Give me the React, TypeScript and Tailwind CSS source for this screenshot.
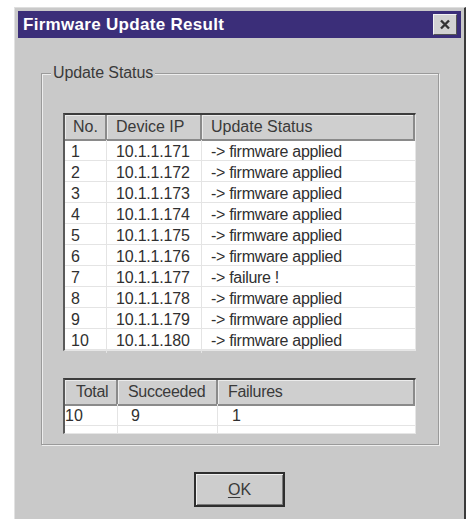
import React from 'react';

const devices = [
  { no: 1, ip: '10.1.1.171', status: '-> firmware applied' },
  { no: 2, ip: '10.1.1.172', status: '-> firmware applied' },
  { no: 3, ip: '10.1.1.173', status: '-> firmware applied' },
  { no: 4, ip: '10.1.1.174', status: '-> firmware applied' },
  { no: 5, ip: '10.1.1.175', status: '-> firmware applied' },
  { no: 6, ip: '10.1.1.176', status: '-> firmware applied' },
  { no: 7, ip: '10.1.1.177', status: '-> failure !' },
  { no: 8, ip: '10.1.1.178', status: '-> firmware applied' },
  { no: 9, ip: '10.1.1.179', status: '-> firmware applied' },
  { no: 10, ip: '10.1.1.180', status: '-> firmware applied' },
];

// raised column header, win9x list-view style
function HeaderCell({ children, className }: { children?: React.ReactNode; className?: string }) {
  return (
    <div
      className={
        'flex items-center h-full bg-[#cfcfcf] text-[#3a3a3a] border-r-2 border-b-2 border-r-[#8a8a8a] border-b-[#8a8a8a] shadow-[inset_1px_1px_0_#ececec] ' +
        (className ?? '')
      }
    >
      {children}
    </div>
  );
}

export default function App() {
  return (
    <div className="w-[474px] h-[519px] bg-white overflow-hidden font-['Liberation_Sans',Arial,sans-serif] text-[16px] text-[#303030]">
      <div className="ml-[14px] mt-[7px] w-[452px] h-[512px] bg-[#c9c9c9] border-l border-l-[#e2e2e2] border-r-2 border-r-[#3a3a3a] border-t border-t-[#dedede] flex flex-col">
        {/* title bar */}
        <div className="mx-[3px] mt-[3px] h-[27px] bg-[#3b2e79] flex items-center pl-[5px] pr-[4px]">
          <span className="text-white font-bold text-[17px] tracking-[0.3px] flex-1">Firmware Update Result</span>
          <div className="w-[24px] h-[21px] bg-[#d2d2d2] border border-[#f2f2f2] border-r-[#555] border-b-[#555] flex items-center justify-center">
            <svg width="12" height="11" viewBox="0 0 12 11">
              <path d="M2 1.5 L10 9.5 M10 1.5 L2 9.5" stroke="#333" strokeWidth="2.4" />
            </svg>
          </div>
        </div>

        {/* group box */}
        <div className="relative ml-[26px] mr-[25px] mt-[35px] h-[372px] border border-[#9a9a9a] shadow-[1px_1px_0_#eeeeee,inset_1px_1px_0_#eeeeee] px-[21px] pt-[39px]">
          <span className="absolute left-[9px] -top-[10px] bg-[#c9c9c9] px-[2px] leading-[18px] tracking-[-0.1px] text-[#3a3a3a]">Update Status</span>

          {/* per-device results */}
          <div className="w-[353px] h-[238px] bg-white border-t-2 border-l-2 border-t-[#3c3c3c] border-l-[#5a5a5a] border-r border-b border-r-[#e6e6e6] border-b-[#e6e6e6] flex flex-col">
            <div className="grid grid-cols-[42px_95px_1fr] h-[25px] shrink-0">
              <HeaderCell className="pl-[8px]">No.</HeaderCell>
              <HeaderCell className="pl-[9px]">Device IP</HeaderCell>
              <HeaderCell className="pl-[9px]">Update Status</HeaderCell>
            </div>
            {devices.map((d) => (
              <div key={d.no} className="grid grid-cols-[42px_95px_1fr] h-[21px] border-b border-b-[#e4e4e4] items-center">
                <div className="pl-[6px] h-full flex items-center border-r border-r-[#e4e4e4]">{d.no}</div>
                <div className="pl-[9px] h-full flex items-center border-r border-r-[#e4e4e4] tracking-[-0.2px]">{d.ip}</div>
                <div className="pl-[9px] h-full flex items-center tracking-[-0.3px]">{d.status}</div>
              </div>
            ))}
          </div>

          {/* totals */}
          <div className="mt-[27px] w-[353px] h-[56px] bg-white border-t-2 border-l-2 border-t-[#3c3c3c] border-l-[#5a5a5a] border-r border-b border-r-[#e6e6e6] border-b-[#e6e6e6] flex flex-col overflow-hidden">
            <div className="grid grid-cols-[53px_100px_1fr] h-[24px] shrink-0">
              <HeaderCell className="pl-[11px] tracking-[-0.3px]">Total</HeaderCell>
              <HeaderCell className="pl-[10px] tracking-[-0.3px]">Succeeded</HeaderCell>
              <HeaderCell className="pl-[10px] tracking-[-0.3px]">Failures</HeaderCell>
            </div>
            <div className="grid grid-cols-[53px_100px_1fr] h-[22px] border-b border-b-[#e4e4e4]">
              <div className="flex items-center border-r border-r-[#e4e4e4]">10</div>
              <div className="pl-[13px] flex items-center border-r border-r-[#e4e4e4]">9</div>
              <div className="pl-[14px] flex items-center">1</div>
            </div>
            <div className="grid grid-cols-[53px_100px_1fr] flex-1">
              <div className="border-r border-r-[#e4e4e4]" />
              <div className="border-r border-r-[#e4e4e4]" />
              <div />
            </div>
          </div>
        </div>

        {/* default push button */}
        <div className="flex justify-center mt-[27px]">
          <button className="w-[91px] h-[35px] bg-[#cdcdcd] border-2 border-[#2e2e2e] shadow-[inset_1px_1px_0_#f0f0f0,inset_-1px_-1px_0_#7a7a7a] flex items-center justify-center text-[16px] text-[#3a3a3a]">
            <span className="underline underline-offset-2">O</span>K
          </button>
        </div>
      </div>
    </div>
  );
}
